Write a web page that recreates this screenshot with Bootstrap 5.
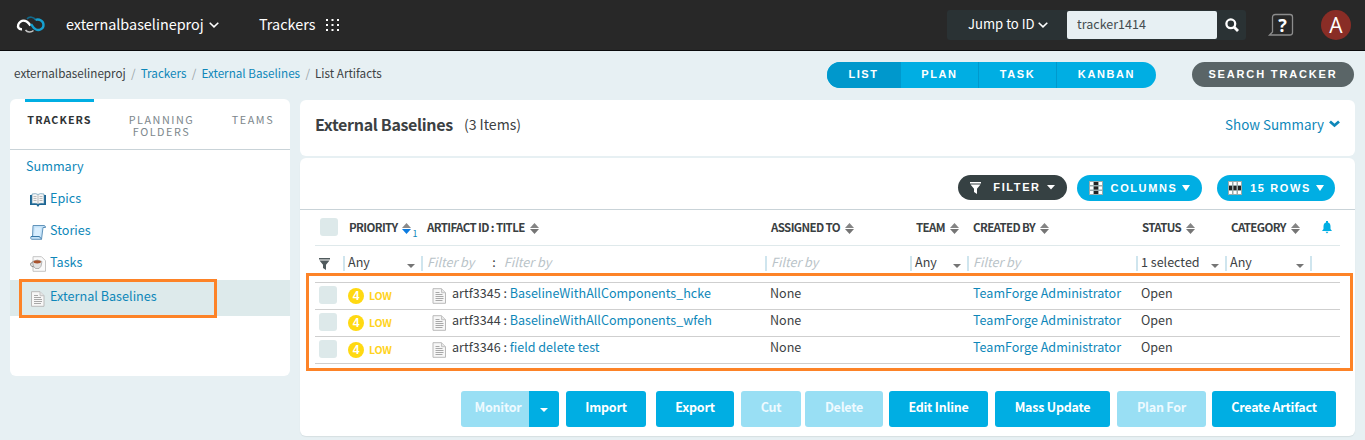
<!DOCTYPE html>
<html lang="en">
<head>
<meta charset="utf-8">
<title>List Artifacts</title>
<meta name="viewport" content="width=device-width, initial-scale=1">
<link href="https://cdn.jsdelivr.net/npm/bootstrap@5.3.0/dist/css/bootstrap.min.css" rel="stylesheet">
<style>
body{background:#e7f0f3;font-family:"Noto Sans CJK SC","Noto Sans",sans-serif;font-size:12.55px;line-height:18px;color:#3c4143;height:440px;overflow:hidden}
a{color:#0e87b9;text-decoration:none}
svg{display:block;flex:none}
.topbar{height:51px;background:#282828;border-bottom:1px solid #0a0a0c;color:#fff;font-size:14.4px}
.topbar .proj{margin:-2px 0 0 20px;width:143px}
.topbar .app{margin:-2px 0 0 40px;width:58px}
.jump{width:299px;height:30px;margin-left:auto;background:#2a3234;border-radius:3px;font-size:13.1px}
.jump input{width:150px;height:28px;background:#e7f0f3;border:0;border-radius:2px;font-size:12.5px;color:#444d50;padding:0 10px 3px}
.help-mark{font-family:"Open Sans",sans-serif}
.avatar-dot{width:30px;height:30px;background:#892d26;font-family:"Open Sans",sans-serif;font-size:21px;margin:0 14px 0 27px}
.crumbs{height:48px;font-size:11.7px;padding:0 11px 2px 14px}
.crumbs>span,.crumbs>a,.crumbs>i{position:relative;top:-1px}
.crumbs i{color:#9ba5a9;font-style:normal;margin:0 5px 0 5.3px}
.pill{font-family:"Liberation Sans",sans-serif;font-weight:700;letter-spacing:1.6px;color:#fff;font-size:11px;border-radius:13px;border:0;line-height:1;padding:0;display:flex;align-items:center;justify-content:center;background:transparent}
.modes{height:26px;width:329px;border-radius:13px;overflow:hidden;background:#00aee3;margin-top:1px}
.modes .pill{border-radius:0;height:26px}
.modes .pill+.pill{border-left:1px solid #0099cd}
.modes .pill.on{background:#0098cc}
.side{width:280px;height:277px;background:#fff;border-radius:6px;margin:0 10px}
.tabs{height:51px;border-bottom:1px solid #c9d3d8;font-size:10.8px;line-height:12px;letter-spacing:1.55px;color:#7c878c;text-align:center}
.tabs div{padding-top:14px}
.tabs .on{border-top:3px solid #00aee3;padding-top:11px;color:#2f3436;font-weight:700;letter-spacing:1.05px;width:69px;margin-left:15px}
.side a{font-size:12.65px;position:relative;top:-1px}
.tree{height:32px;padding-left:20px}
.tree svg{margin:2px 4px 0 0}
.panel{background:#fff;border-radius:6px;width:1055px}
.tools{height:52px;padding:17px 20px 0 0;border-bottom:1px solid #c9d3d8}
.grid{width:1025px;margin:0 15px;table-layout:fixed;border-collapse:collapse}
.grid td,.grid th{padding:0 0 0 6px;white-space:nowrap}
.grid th{height:35px;border-bottom:1px solid #dfe9eb;font-size:11.5px;letter-spacing:-.62px;font-weight:700;color:#3a4042}
.grid th svg,.grid th span{display:inline-block;vertical-align:middle}
.grid th span{position:relative;top:-1px}
.grid th span+svg{margin-left:3px}
.grid .flt td{height:37px;border-bottom:1px solid #cfcfcf}
.grid .flt .cell{height:15px;margin-left:-6px;padding-left:3px;padding-right:6px;border-left:2px solid #cfe5ee;line-height:11px}
.grid .flt em{color:#b9c3c8;margin-left:1px}
.grid .rw td{height:27px;border-bottom:1px solid #cfcfcf;padding-bottom:5px}
.box{width:18px;height:18px;background:#dde9ea;border-radius:3px}
.rw .box{position:relative;top:-1px}
.lowdot{width:16px;height:16px;border-radius:50%;background:#ffd912;color:#fff;font-family:"Liberation Sans",sans-serif;font-weight:700;font-size:12px;line-height:16px;text-align:center}
.low{color:#ffd321;font-size:10.5px;font-weight:700;letter-spacing:-.2px}
.mark-out{position:absolute;border:3px solid #fd8327;pointer-events:none}
.act{height:36px;background:#00aee3;color:#fff;font-weight:700;border:0;border-radius:3px;padding:0 0 2px;font-size:12.5px;letter-spacing:-.22px;line-height:1}
.act.dim{background:#99dff4;color:#eefaff}
</style>
</head>
<body>
<svg width="0" height="0" class="position-absolute"><defs>
<g id="sort"><path d="M0 5L4.500 0L9 5z" fill="#858585"/><path d="M0 6L4.500 11L9 6z" fill="#757575"/></g>
<g id="doc"><path d="M1 .7h8.500l4 4V15.300H1z" fill="#f7f7f7" stroke="#b9b9b9"/><path d="M9.500 .7v4h4" fill="#e6e6e6" stroke="#c3c3c3"/><path d="M3.500 4.500h4M3.500 6.500h7M3.500 8.500h8M3.500 10.500h8M3.500 12.500h7" stroke="#a8a8a8"/></g>
<path id="funnel" d="M0 0h11v1.500H0zM.500 2.500h10L7 6.800V12L4 10V6.800z"/>
</defs></svg>
<header class="topbar d-flex align-items-center">
  <svg style="margin-left:16px" width="30" height="18" viewBox="0 0 30 18" fill="none" stroke-width="2.400"><path d="M6 13.200C2.500 13.500 1.500 11 2.300 8.500S6 4 8.500 4.800C11 5 12.500 7 14.500 9.500" stroke="#fff"/><path d="M9.500 14c2 2.500 5.500 2.700 8 .5" stroke="#c4c4c4" stroke-width="1.600"/><path d="M11 2.800c2.500-2.500 7-2 8.500 1" stroke="#12688a" stroke-width="1.700"/><path d="M19.500 3.800c4-1 8 1 8 5.200 0 4-4.500 6-7.500 4.500-2.500-1-3.500-3-5-5.500" stroke="#16a0d0"/></svg>
  <span class="proj">externalbaselineproj</span>
  <svg width="10" height="6" viewBox="0 0 10 6"><path d="M.7.700L5 4.900 9.300.700" fill="none" stroke="#fff" stroke-width="1.500"/></svg>
  <span class="app">Trackers</span>
  <svg style="margin-left:9px" width="13" height="12" viewBox="0 0 13 12" fill="#fff"><path d="M0 0h2v2H0zM5.500 0h2v2h-2zM11 0h2v2h-2zM0 5h2v2H0zM5.500 5h2v2h-2zM11 5h2v2h-2zM0 10h2v2H0zM5.500 10h2v2h-2zM11 10h2v2h-2z"/></svg>
  <div class="jump d-flex align-items-center">
    <div class="d-flex align-items-center" style="width:120px;padding-left:21px"><span style="margin-top:-3px">Jump to ID</span><svg style="margin-left:3px" width="10" height="6" viewBox="0 0 10 6"><path d="M.7.700L5 4.900 9.300.700" fill="none" stroke="#fff" stroke-width="1.500"/></svg></div>
    <input value="tracker1414" aria-label="ID">
    <svg class="ms-2" width="14" height="14" viewBox="0 0 14 14" fill="none" stroke="#fff"><circle cx="5.800" cy="5.800" r="4.400" stroke-width="2.300"/><path d="M9 9l4 4" stroke-width="2.800"/></svg>
  </div>
  <svg style="margin-left:22px" width="26" height="24" viewBox="0 0 26 24" overflow="visible"><path d="M4.500 17V4.500q0-3 3-3h14.500q2.500 0 2.500 2.500v15.500q0 2.500-2.500 2.500H1.500l3-3z" fill="none" stroke="#8c8c8c" stroke-width="1.300"/><text class="help-mark" x="14.500" y="19" text-anchor="middle" fill="#fff" font-size="18" font-weight="700">?</text></svg>
  <div class="avatar-dot rounded-circle d-flex align-items-center justify-content-center">A</div>
</header>
<div class="crumbs d-flex align-items-center">
  <span>externalbaselineproj</span><i>/</i><a href="#">Trackers</a><i>/</i><a href="#">External Baselines</a><i>/</i><span>List Artifacts</span>
  <div class="modes d-flex ms-auto">
    <button class="pill on" style="width:73px">LIST</button><button class="pill" style="width:78px">PLAN</button><button class="pill" style="width:78px">TASK</button><button class="pill" style="width:100px">KANBAN</button>
  </div>
  <button class="pill" style="width:162px;height:25px;background:#5a6567;margin-left:36px;letter-spacing:1.85px">SEARCH TRACKER</button>
</div>
<div class="d-flex align-items-start">
  <aside class="side position-relative">
    <div class="tabs d-flex"><div class="on">TRACKERS</div><div style="width:135px">PLANNING<br>FOLDERS</div><div style="width:48px">TEAMS</div></div>
    <div style="padding:8px 0 0 16px"><a href="#">Summary</a></div>
    <div class="tree d-flex align-items-center" style="margin-top:7px"><svg width="16" height="16" viewBox="0 0 16 16"><path d="M0 3h16v10H9.500L8 15 6.500 13H0z" fill="#1d6593"/><path d="M2 2q4-1 6 .5Q10 1 14 2v9.500q-4-.5-6 .5-2-1-6-.5z" fill="#f5f5f5" stroke="#4a86a8" stroke-width=".6"/><path d="M8 3v9M3.500 4.500h3M3.500 6.500h3M3.500 8.500h3M9.500 4.500h3M9.500 6.500h3M9.500 8.500h3" stroke="#bbb"/></svg><a href="#">Epics</a></div>
    <div class="tree d-flex align-items-center"><svg width="16" height="16" viewBox="0 0 16 16"><path d="M3 1.500h11q1.500 0 1.500 2H13l-1.500 11.800H1.500q-1.500-1-.5-2.800h1.500z" fill="#c4e2f8" stroke="#5389b3" stroke-width=".9"/><path d="M5 3.500h6l-1 9H4z" fill="#d9eefe"/><path d="M1 12.500h8.500q.5 1.500 2 2.500" fill="none" stroke="#3978a8"/></svg><a href="#">Stories</a></div>
    <div class="tree d-flex align-items-center"><svg width="16" height="16" viewBox="0 0 16 16"><path d="M3 .7h8.500l4 4v10.600H3z" fill="#fafafa" stroke="#c4c4c4"/><path d="M2.500 5.500q5-3 9.500 0-.5 6-3 7H5.500q-2.500-1-3-7z" fill="#e3e3e3" stroke="#999" stroke-width=".7"/><ellipse cx="7.200" cy="5.800" rx="3.800" ry="1.600" fill="#a8532e"/><path d="M2.500 6.500Q0 6.500.7 9q.6 2 3 1.800" fill="none" stroke="#888"/></svg><a href="#">Tasks</a></div>
    <div class="tree d-flex align-items-center" style="height:36px;background:#ddeaeb;margin-top:1px;padding-bottom:3px"><svg width="16" height="16" viewBox="-.500 0 16 16" style="margin-top:5px"><use href="#doc"/></svg><a href="#">External Baselines</a></div>
    <div class="mark-out" style="left:9px;top:180px;width:198px;height:39px"></div>
  </aside>
  <main class="position-relative" style="padding-top:1px">
    <section class="panel d-flex align-items-center" style="height:56px;padding:0 15px 8px;margin-bottom:2px">
      <span style="font-size:16px;font-weight:700;letter-spacing:-.32px">External Baselines</span><span style="font-size:14.1px;margin-left:11px">(3 Items)</span>
      <a class="ms-auto d-flex align-items-center" href="#" style="font-size:13.4px"><span>Show Summary</span><svg style="margin-left:5px" width="11" height="8" viewBox="0 0 11 8"><path d="M1 1.500l4.500 4 4.500-4" fill="none" stroke="#0e87b9" stroke-width="2.800"/></svg></a>
    </section>
    <section class="panel" style="height:278px;box-shadow:0 1px 1px #d6dfe2">
      <div class="tools d-flex justify-content-end">
        <button class="pill" style="width:109px;height:25px;background:#364143"><svg class="me-2" width="11" height="12" fill="#fff"><use href="#funnel"/></svg><span class="ms-1">FILTER</span><svg style="margin-left:6px" width="8" height="5"><path d="M0 0h8L4 4.500z" fill="#fff"/></svg></button>
        <button class="pill" style="width:125px;height:26px;background:#00aee3;margin-left:10px"><svg class="me-2" width="14" height="14"><path d="M0 0h14v14H0z" fill="#9aa"/><path d="M1 1h3v3H1zM1 5.500h3v3H1zM1 10h3v3H1zM10 1h3v3h-3zM10 5.500h3v3h-3zM10 10h3v3h-3z" fill="#fff"/><path d="M5 1h4v3H5zM5 5.500h4v3H5zM5 10h4v3H5z" fill="#222"/></svg>COLUMNS<svg style="margin-left:5px" width="8" height="6"><path d="M0 0h8L4 6z" fill="#fff"/></svg></button>
        <button class="pill" style="width:118px;height:26px;background:#00aee3;margin-left:15px"><svg class="me-2" width="14" height="14"><path d="M0 0h14v14H0z" fill="#9aa"/><path d="M1 1h3v3H1zM5.500 1h3v3h-3zM10 1h3v3h-3zM1 10h3v3H1zM5.500 10h3v3h-3zM10 10h3v3h-3z" fill="#fff"/><path d="M1 5h3v4H1zM5.500 5h3v4h-3zM10 5h3v4h-3z" fill="#222"/></svg>15 ROWS<svg style="margin-left:5px" width="8" height="6"><path d="M0 0h8L4 6z" fill="#fff"/></svg></button>
      </div>
      <table class="grid">
        <colgroup><col style="width:28px"><col style="width:78px"><col style="width:344px"><col style="width:145px"><col style="width:57px"><col style="width:169px"><col style="width:89px"><col style="width:85px"><col style="width:30px"></colgroup>
        <tr><th style="padding-left:5px"><div class="box"></div></th>
          <th><span>PRIORITY</span> <svg width="9" height="11"><path d="M0 5L4.500 0L9 5z" fill="#8a8a8a"/><path d="M0 6L4.500 11L9 6z" fill="#0b7be0"/></svg><a href="#" style="font-size:9px;position:relative;top:6px;font-weight:400;margin-left:1px">1</a></th>
          <th><span>ARTIFACT ID : TITLE</span> <svg width="9" height="11"><use href="#sort"/></svg></th>
          <th><span>ASSIGNED TO</span> <svg width="9" height="11"><use href="#sort"/></svg></th>
          <th><span>TEAM</span> <svg width="9" height="11"><use href="#sort"/></svg></th>
          <th><span>CREATED BY</span> <svg width="9" height="11"><use href="#sort"/></svg></th>
          <th><span>STATUS</span> <svg width="9" height="11"><use href="#sort"/></svg></th>
          <th><span>CATEGORY</span> <svg width="9" height="11"><use href="#sort"/></svg></th>
          <th style="padding:0 0 4px 12px"><svg width="10" height="13"><path d="M4 0h2v1.500q2.500.7 2.500 4V8L10 10H0l1.500-2V5.500q0-3.300 2.500-4zM3.500 10.800h3L5 12.500z" fill="#00aee3"/></svg></th></tr>
        <tr class="flt"><td style="padding-left:4px"><svg width="11" height="12" fill="#505a5d"><use href="#funnel"/></svg></td>
          <td><div class="cell d-flex">Any<svg class="ms-auto mt-2" width="8" height="4"><path d="M0 0h8L4 4z" fill="#757575"/></svg></div></td>
          <td><div class="cell"><em>Filter by</em><span style="margin:0 7px 0 18px">:</span><em>Filter by</em></div></td>
          <td><div class="cell"><em>Filter by</em></div></td>
          <td><div class="cell d-flex">Any<svg class="ms-auto mt-2" width="8" height="4"><path d="M0 0h8L4 4z" fill="#757575"/></svg></div></td>
          <td><div class="cell"><em>Filter by</em></div></td>
          <td><div class="cell d-flex">1 selected<svg class="ms-auto mt-2" width="8" height="4"><path d="M0 0h8L4 4z" fill="#757575"/></svg></div></td>
          <td><div class="cell d-flex">Any<svg class="ms-auto mt-2" width="8" height="4"><path d="M0 0h8L4 4z" fill="#757575"/></svg></div></td>
          <td><div class="cell"></div></td></tr>
        <tbody id="rows"></tbody>
      </table>
      <div class="d-flex" style="margin:27px 0 0 161px">
        <button class="act dim rounded-end-0" style="width:68px;padding-left:6px">Monitor</button><button class="act rounded-start-0 d-flex align-items-center justify-content-center" style="width:30px" aria-label="Monitor menu"><svg class="mt-1" width="8" height="4"><path d="M0 0h8L4 4z" fill="#fff"/></svg></button>
        <button class="act" style="width:80px;margin-left:7px">Import</button><button class="act" style="width:78px;margin-left:10px">Export</button><button class="act dim" style="width:60px;margin-left:7px">Cut</button><button class="act dim" style="width:78px;margin-left:4px">Delete</button><button class="act" style="width:99px;margin-left:6px">Edit Inline</button><button class="act" style="width:115px;margin-left:7px">Mass Update</button><button class="act dim" style="width:89px;margin-left:7px">Plan For</button><button class="act" style="width:124px;margin-left:6px">Create Artifact</button>
      </div>
    </section>
    <div class="mark-out" style="left:6px;top:174px;width:1047px;height:98px"></div>
  </main>
</div>
<script>
const rows=[['artf3345','BaselineWithAllComponents_hcke'],['artf3344','BaselineWithAllComponents_wfeh'],['artf3346','field delete test']];
document.getElementById('rows').innerHTML=rows.map(([id,t])=>`<tr class="rw"><td style="padding:0 0 0 4px"><div class="box"></div></td>
<td style="padding:0 0 0 5px"><div class="d-flex align-items-center"><div class="lowdot">4</div><span class="low" style="margin-left:5px">LOW</span></div></td>
<td style="padding:0 0 0 11px"><div class="d-flex align-items-center"><svg width="15" height="16" style="margin-right:5px"><use href="#doc"/></svg><span style="margin-top:-5px">${id} : <a href="#">${t}</a></span></div></td>
<td style="padding-left:5px">None</td><td></td><td>
<a href="#">TeamForge Administrator</a></td><td style="padding-left:5px">Open</td><td></td><td></td></tr>`).join('');
</script>
<script src="https://cdn.jsdelivr.net/npm/bootstrap@5.3.0/dist/js/bootstrap.bundle.min.js"></script>
</body>
</html>
